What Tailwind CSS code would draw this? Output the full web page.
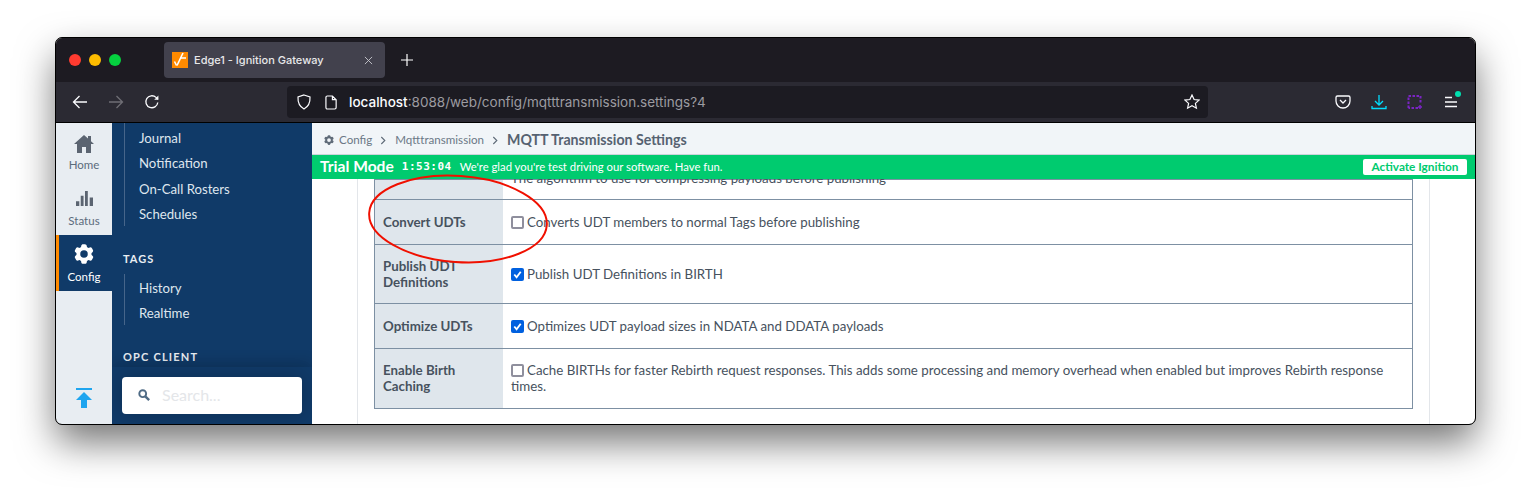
<!doctype html>
<html lang="en">
<head>
  <meta charset="utf-8" />
  <title>Edge1 - Ignition Gateway</title>
  <script src="https://cdn.jsdelivr.net/npm/@tailwindcss/browser@4"></script>
</head>
<body class="h-[498px] w-[1531px] overflow-hidden bg-white pl-[56px] pt-[38px] font-['Lato',sans-serif]">
  <div class="relative flex h-[386px] w-[1419px] flex-col overflow-hidden rounded-[6px] shadow-[0_18px_38px_rgba(0,0,0,0.55),0_0_1px_#000] outline outline-black">
    <!-- tab strip -->
    <div class="flex h-[44px] shrink-0 items-center bg-[#1d1b22] font-['Inter',sans-serif]">
      <div class="ml-[13px] flex gap-[8px]">
        <span class="size-[12px] rounded-full bg-[#ff3b30]"></span>
        <span class="size-[12px] rounded-full bg-[#fdbc00]"></span>
        <span class="size-[12px] rounded-full bg-[#05d13f]"></span>
      </div>
      <div class="ml-[43px] flex h-[36px] w-[221px] items-center rounded-[4px] bg-[#42414d] pl-[8px] pr-[12px] text-white">
        <span class="flex size-[16px] items-center justify-center bg-[#ff8a00]">
          <svg viewBox="0 0 16 16" class="size-[16px]" fill="none" stroke="#fff"><path d="M2.500 9.500l2 4" stroke-width="1.600"/><path d="M5 13.500L11 1" stroke-width="1.600"/><path d="M8 6h6" stroke-width="1.400"/></svg>
        </span>
        <span class="ml-[6px] flex-1 text-[11px] font-medium text-[#e8e8ea]">Edge1 - Ignition Gateway</span>
        <svg viewBox="0 0 10 10" class="size-[9px]" stroke="#c9c9cf" stroke-width="1"><path d="M1 1l8 8M9 1l-8 8"/></svg>
      </div>
      <svg viewBox="0 0 12 12" class="ml-[16px] size-[12px]" stroke="#fff" stroke-width="1.200"><path d="M6 0v12M0 6h12"/></svg>
    </div>
    <!-- toolbar -->
    <div class="flex h-[41px] shrink-0 items-center border-b border-black bg-[#2b2a33] font-['Inter',sans-serif]">
      <svg viewBox="0 0 16 16" class="ml-[16px] size-[16px]" fill="none" stroke="#fbfbfe" stroke-width="1.300"><path d="M15 8H1.500M7.500 2L1.500 8l6 6"/></svg>
      <svg viewBox="0 0 16 16" class="ml-[20px] size-[16px]" fill="none" stroke="#6f6e75" stroke-width="1.300"><path d="M1 8h13.500M8.500 2l6 6-6 6"/></svg>
      <svg viewBox="0 0 16 16" class="ml-[20px] size-[16px]" fill="none" stroke="#fbfbfe" stroke-width="1.300"><path d="M13.800 8.500A6 6 0 1 1 12 3.400l2 2"/><path d="M14.400 1.500v4.200h-4.200" fill="#fbfbfe" stroke="none"/></svg>
      <div class="ml-[127px] flex h-[32px] w-[921px] items-center rounded-[4px] bg-[#1c1b22] pl-[9px] pr-[8px]">
        <svg viewBox="0 0 16 16" class="size-[16px]" fill="none" stroke="#fbfbfe" stroke-width="1.200"><path d="M8 1l6 2c.3 5-1.500 9.500-6 12C3.500 12.500 1.700 8 2 3z"/></svg>
        <svg viewBox="0 0 14 16" class="ml-[13px] h-[15px] w-[13px]" fill="none" stroke="#fbfbfe" stroke-width="1.300"><path d="M2.500 1h5.500l4 4v8.500a1.500 1.500 0 0 1-1.500 1.500h-8A1.500 1.500 0 0 1 1 13.500v-11A1.500 1.500 0 0 1 2.500 1zM8 1v4h4"/></svg>
        <span class="ml-[11px] flex-1 text-[13.500px] text-[#9c9ba1]"><span class="font-medium text-[#fbfbfe]">localhost</span>:8088/web/config/mqtttransmission.settings?4</span>
        <svg viewBox="0 0 16 16" class="size-[16px]" fill="none" stroke="#fbfbfe" stroke-width="1.200"><path d="M8 1l2.100 4.500 4.900.6-3.600 3.300 1 4.800L8 11.800l-4.400 2.400 1-4.800L1 6.100l4.900-.6z"/></svg>
      </div>
      <svg viewBox="0 0 16 16" class="ml-[127px] size-[16px]" fill="none" stroke="#fbfbfe" stroke-width="1.300"><path d="M2.500 2h11A1.500 1.500 0 0 1 15 3.500V7a7 7 0 0 1-14 0V3.500A1.500 1.500 0 0 1 2.500 2z"/><path d="M5 6l3 3 3-3"/></svg>
      <svg viewBox="0 0 16 16" class="ml-[20px] size-[16px]" fill="none" stroke="#00ddff" stroke-width="1.300"><path d="M8 1v9.500M4 7l4 4 4-4M1 12v2.500h14V12"/></svg>
      <svg viewBox="0 0 16 16" class="ml-[20px] size-[16px]" fill="none" stroke="#7b24c4" stroke-width="2"><path d="M1.500 14V2h12v8M11 14H1.500" stroke-dasharray="2.500 1.500"/><path d="M13 11v4M11 13h4" stroke-width="1.500"/></svg>
      <div class="relative ml-[20px] size-[16px]">
        <svg viewBox="0 0 16 16" class="size-[16px]" stroke="#fbfbfe" stroke-width="1.300"><path d="M2 3.500h7M2 8h12M2 12.500h12"/></svg>
        <span class="absolute right-[-2px] top-[-3px] size-[6px] rounded-full bg-[#00e0b0]"></span>
      </div>
    </div>
    <!-- page -->
    <div class="flex min-h-0 flex-1">
      <!-- icon rail -->
      <nav class="flex w-[56px] shrink-0 flex-col bg-[#e8edf2] text-[11.500px] text-[#5b6b7c]">
        <a class="flex h-[56px] flex-col items-center justify-end pb-[6px]">
          <svg viewBox="0 0 20 18" class="mb-[3px] h-[18px] w-[20px]" fill="#5b6471"><path d="M10 0L0 9h3v9h5v-6h4v6h5V9h3l-3-2.700V1h-3v2.600z"/></svg>
          Home
        </a>
        <a class="flex h-[56px] flex-col items-center justify-end pb-[6px]">
          <svg viewBox="0 0 18 18" class="mb-[5px] size-[17px]" fill="#5b6471"><path d="M0 12h3.500v5H0zM5 6h3v11H5zM9.500 1h3v16h-3zM14.500 8H18v9h-3.500z"/></svg>
          Status
        </a>
        <a class="flex h-[56px] flex-col items-center justify-end border-l-[3px] border-[#ff8a00] bg-[#103a68] pb-[6px] pr-[3px] text-white">
          <svg viewBox="0 0 24 24" class="mb-[2px] size-[24px]" fill="#fff"><path fill-rule="evenodd" clip-rule="evenodd" d="M11.078 2.250c-.917 0-1.699.663-1.850 1.567L9.050 4.889c-.020.120-.115.260-.297.348a7.493 7.493 0 0 0-.986.570c-.166.115-.334.126-.450.083L6.300 5.508a1.875 1.875 0 0 0-2.282.819l-.922 1.597a1.875 1.875 0 0 0 .432 2.385l.840.692c.095.078.170.229.154.430a7.598 7.598 0 0 0 0 1.139c.015.200-.059.352-.153.430l-.841.692a1.875 1.875 0 0 0-.432 2.385l.922 1.597a1.875 1.875 0 0 0 2.282.818l1.019-.382c.115-.043.283-.031.450.082.312.214.641.405.985.570.182.088.277.228.297.350l.178 1.071c.151.904.933 1.567 1.850 1.567h1.844c.916 0 1.699-.663 1.850-1.567l.178-1.072c.020-.120.114-.260.297-.349.344-.165.673-.356.985-.570.167-.114.335-.125.450-.082l1.020.382a1.875 1.875 0 0 0 2.280-.819l.923-1.597a1.875 1.875 0 0 0-.432-2.385l-.840-.692c-.095-.078-.170-.229-.154-.430a7.614 7.614 0 0 0 0-1.139c-.016-.200.059-.352.153-.430l.840-.692c.708-.582.891-1.590.433-2.385l-.922-1.597a1.875 1.875 0 0 0-2.282-.818l-1.020.382c-.114.043-.282.031-.449-.083a7.490 7.490 0 0 0-.985-.570c-.183-.087-.277-.227-.297-.348l-.179-1.072a1.875 1.875 0 0 0-1.850-1.567h-1.843ZM12 15.750a3.750 3.750 0 1 0 0-7.500 3.750 3.750 0 0 0 0 7.500Z"/></svg>
          Config
        </a>
        <div class="mt-auto flex justify-center pb-[16px]">
          <svg viewBox="0 0 16 20" class="h-[20px] w-[16px]" fill="#1fa5ef"><path d="M0 0h16v2H0zM8 4l8 8h-5v8H5v-8H0z"/></svg>
        </div>
      </nav>
      <!-- nav column -->
      <aside class="relative flex w-[200px] shrink-0 flex-col overflow-hidden bg-[#103a68] text-[13.200px] text-[#dfe6ee]">
        <div class="ml-[12px] mb-[26px] flex flex-col gap-[6.500px] border-l border-[#46658a] pb-[2px] pl-[14px] pt-[5.500px] leading-[19px]">
          <a>Journal</a>
          <a>Notification</a>
          <a>On-Call Rosters</a>
          <a>Schedules</a>
        </div>
        <h4 class="ml-[11px] text-[11px] font-bold leading-[14px] tracking-[1px] text-[#e8edf2]">TAGS</h4>
        <div class="mb-[25px] ml-[12px] mt-[8px] flex flex-col gap-[6px] border-l border-[#46658a] pb-[2.500px] pl-[14px] pt-[4.500px] leading-[19px]">
          <a>History</a>
          <a>Realtime</a>
        </div>
        <h4 class="ml-[11px] text-[11px] font-bold leading-[14px] tracking-[1.200px] text-[#e8edf2]">OPC CLIENT</h4>
        <div class="absolute inset-x-0 bottom-0 h-[57px] bg-[#103a68] shadow-[0_-6px_12px_rgba(0,0,0,0.12)]">
          <div class="mx-[10px] mt-[10px] flex h-[37px] items-center rounded-[4px] bg-white pb-[1px] pl-[16px] shadow-[0_0_20px_rgba(0,0,0,0.2)]">
            <svg viewBox="0 0 14 14" class="size-[12px]" fill="none" stroke="#4f6b85" stroke-width="2.200"><circle cx="5.500" cy="5.500" r="4"/><path d="M8.500 8.500L13 13" stroke-width="2.800"/></svg>
            <span class="ml-[12px] text-[16px] text-[#e4e6e9]">Search...</span>
          </div>
        </div>
      </aside>
      <!-- main -->
      <main class="flex min-w-0 flex-1 flex-col">
        <div class="flex h-[32px] shrink-0 items-center border-b border-[#ccd3da] bg-[#f1f5f8] pl-[11px] pt-[3px] text-[11.600px] text-[#6b7886]">
          <svg viewBox="0 0 24 24" class="size-[12px]" fill="#5f6b78"><path fill-rule="evenodd" clip-rule="evenodd" d="M11.078 2.250c-.917 0-1.699.663-1.850 1.567L9.050 4.889c-.020.120-.115.260-.297.348a7.493 7.493 0 0 0-.986.570c-.166.115-.334.126-.450.083L6.300 5.508a1.875 1.875 0 0 0-2.282.819l-.922 1.597a1.875 1.875 0 0 0 .432 2.385l.840.692c.095.078.170.229.154.430a7.598 7.598 0 0 0 0 1.139c.015.200-.059.352-.153.430l-.841.692a1.875 1.875 0 0 0-.432 2.385l.922 1.597a1.875 1.875 0 0 0 2.282.818l1.019-.382c.115-.043.283-.031.450.082.312.214.641.405.985.570.182.088.277.228.297.350l.178 1.071c.151.904.933 1.567 1.850 1.567h1.844c.916 0 1.699-.663 1.850-1.567l.178-1.072c.020-.120.114-.260.297-.349.344-.165.673-.356.985-.570.167-.114.335-.125.450-.082l1.020.382a1.875 1.875 0 0 0 2.280-.819l.923-1.597a1.875 1.875 0 0 0-.432-2.385l-.840-.692c-.095-.078-.170-.229-.154-.430a7.614 7.614 0 0 0 0-1.139c-.016-.200.059-.352.153-.430l.840-.692c.708-.582.891-1.590.433-2.385l-.922-1.597a1.875 1.875 0 0 0-2.282-.818l-1.020.382c-.114.043-.282.031-.449-.083a7.490 7.490 0 0 0-.985-.570c-.183-.087-.277-.227-.297-.348l-.179-1.072a1.875 1.875 0 0 0-1.850-1.567h-1.843ZM12 15.750a3.750 3.750 0 1 0 0-7.500 3.750 3.750 0 0 0 0 7.500Z"/></svg>
          <span class="ml-[4px]">Config</span>
          <svg viewBox="0 0 8 10" class="mx-[8px] h-[9px] w-[7px]" fill="none" stroke="#5f6b78" stroke-width="1.300"><path d="M1.500 1l4 4-4 4"/></svg>
          <span>Mqtttransmission</span>
          <svg viewBox="0 0 8 10" class="mx-[8px] h-[9px] w-[7px]" fill="none" stroke="#5f6b78" stroke-width="1.300"><path d="M1.500 1l4 4-4 4"/></svg>
          <span class="text-[14.200px] font-bold text-[#566271]">MQTT Transmission Settings</span>
        </div>
        <div class="flex h-[24px] shrink-0 items-center bg-[#00cb6f] px-[8px] text-white">
          <span class="-mt-[1px] text-[15.600px] font-bold">Trial Mode</span>
          <span class="ml-[8px] font-['DejaVu_Sans_Mono',monospace] text-[11px] font-bold tracking-[0.500px]">1:53:04</span>
          <span class="ml-[8px] text-[11.300px]">We're glad you're test driving our software. Have fun.</span>
          <span class="ml-auto flex h-[16px] w-[104px] items-center justify-center rounded-[2px] bg-white text-[11.800px] font-bold text-[#00cb6f]">Activate Ignition</span>
        </div>
        <div class="flex min-h-0 flex-1 flex-col justify-end overflow-hidden bg-white px-[45px]">
          <div class="flex flex-col justify-end border-x border-[#e3e6ea] px-[16px] pb-[15px]">
            <div class="border border-[#7d90a3] text-[13.300px] leading-[16px] text-[#47525e]">
              <div class="flex h-[20px] border-b border-[#7d90a3]">
                <div class="h-full w-[128px] shrink-0 bg-[#dfe6ec]"></div>
                <div class="-mt-[9px] pl-[8px] leading-[14px]">The algorithm to use for compressing payloads before publishing</div>
              </div>
              <div class="flex h-[45px] border-b border-[#7d90a3]">
                <div class="flex w-[128px] shrink-0 items-center bg-[#dfe6ec] pl-[8px] font-bold">Convert UDTs</div>
                <div class="flex items-center pl-[8px]"><span class="mr-[3px] size-[13px] rounded-[2px] border-2 border-[#8f8f9d] bg-white"></span>Converts UDT members to normal Tags before publishing</div>
              </div>
              <div class="flex h-[59px] border-b border-[#7d90a3]">
                <div class="flex w-[128px] shrink-0 items-center bg-[#dfe6ec] pl-[8px] font-bold">Publish UDT<br>Definitions</div>
                <div class="flex items-center pl-[8px]"><span class="mr-[3px] flex size-[13px] items-center justify-center rounded-[2px] bg-[#0060df]"><svg viewBox="0 0 12 12" class="size-[11px]" fill="none" stroke="#fff" stroke-width="2"><path d="M2.500 6l2.500 3 4.500-6"/></svg></span>Publish UDT Definitions in BIRTH</div>
              </div>
              <div class="flex h-[45px] border-b border-[#7d90a3]">
                <div class="flex w-[128px] shrink-0 items-center bg-[#dfe6ec] pl-[8px] font-bold">Optimize UDTs</div>
                <div class="flex items-center pl-[8px]"><span class="mr-[3px] flex size-[13px] items-center justify-center rounded-[2px] bg-[#0060df]"><svg viewBox="0 0 12 12" class="size-[11px]" fill="none" stroke="#fff" stroke-width="2"><path d="M2.500 6l2.500 3 4.500-6"/></svg></span>Optimizes UDT payload sizes in NDATA and DDATA payloads</div>
              </div>
              <div class="flex h-[59px]">
                <div class="flex w-[128px] shrink-0 items-center bg-[#dfe6ec] pb-[2px] pl-[8px] font-bold">Enable Birth<br>Caching</div>
                <div class="flex-1 self-center px-[8px] pb-[2px]"><span class="mr-[3px] inline-block size-[13px] translate-y-[2px] rounded-[2px] border-2 border-[#8f8f9d] bg-white"></span>Cache BIRTHs for faster Rebirth request responses. This adds some processing and memory overhead when enabled but improves Rebirth response times.</div>
              </div>
            </div>
          </div>
        </div>
      </main>
    </div>
    <!-- annotation drawn over the screenshot -->
    <svg viewBox="0 0 190 100" class="absolute left-[307px] top-[134px] h-[100px] w-[190px]" fill="none" stroke="#f01000" stroke-width="2"><ellipse cx="95" cy="47" rx="89" ry="43" transform="rotate(4 95 47)"/></svg>
  </div>
</body>
</html>
